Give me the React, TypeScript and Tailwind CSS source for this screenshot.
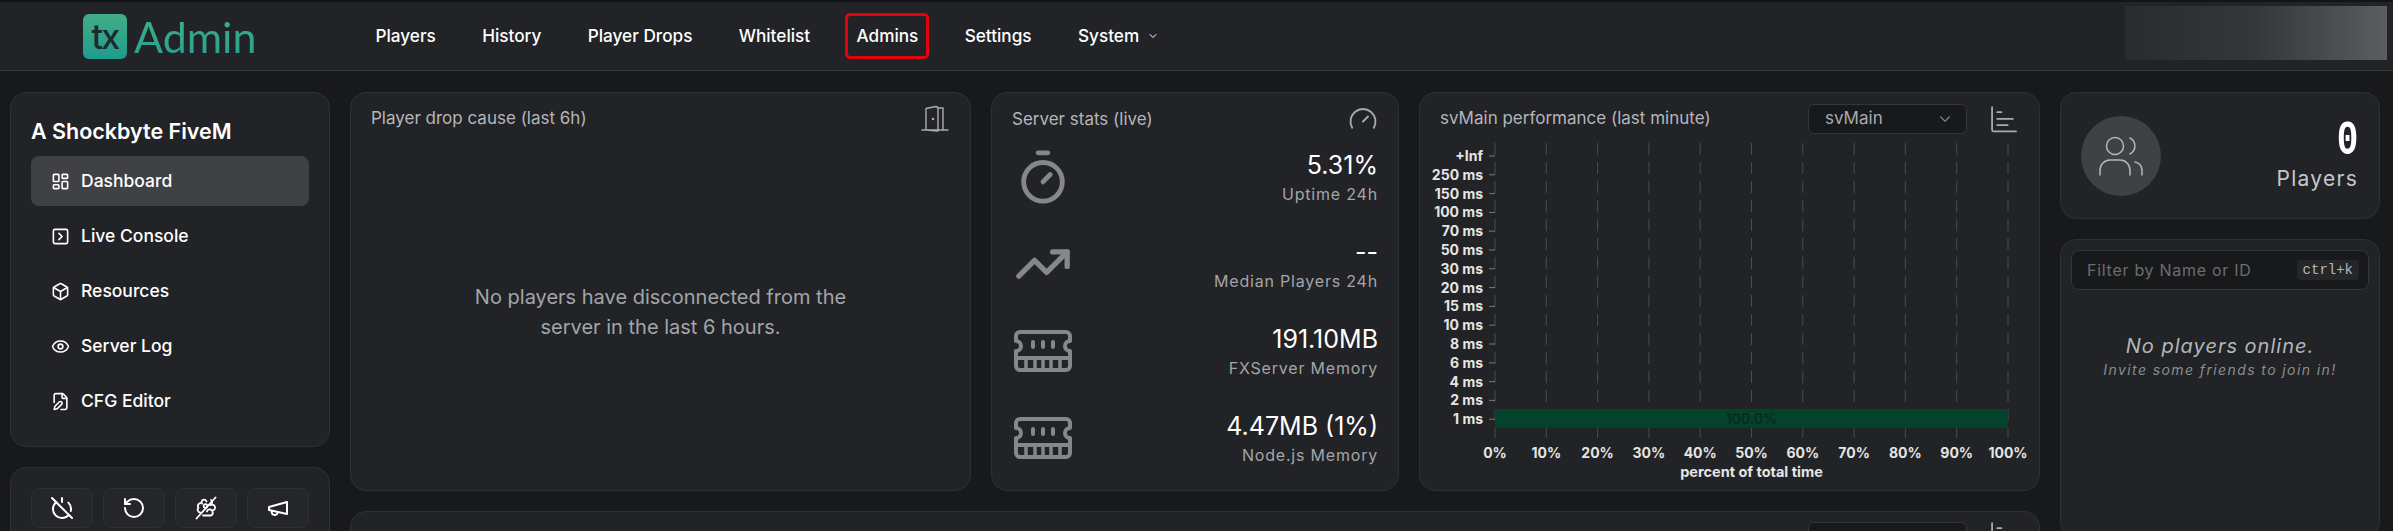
import {
  Box,
  ChevronDown,
  Eye,
  FilePen,
  Gauge,
  LayoutDashboard,
  PowerOff,
  RotateCcw,
  SquareChevronRight,
  Timer,
  TrendingUp,
} from "lucide-react";

const navLinks = ["Players", "History", "Player Drops", "Whitelist", "Admins", "Settings"];

const sideItems = [
  { label: "Dashboard", icon: LayoutDashboard, active: true },
  { label: "Live Console", icon: SquareChevronRight },
  { label: "Resources", icon: Box },
  { label: "Server Log", icon: Eye },
  { label: "CFG Editor", icon: FilePen },
];

function MemoryIcon() {
  return (
    <svg width="58" height="42" viewBox="0 0 58 42" fill="none" stroke="currentColor" strokeWidth="4" strokeLinecap="round" strokeLinejoin="round">
      <path d="M6 2H52A4 4 0 0 1 56 6V11A5 5 0 0 0 56 21V36A4 4 0 0 1 52 40H6A4 4 0 0 1 2 36V21A5 5 0 0 0 2 11V6A4 4 0 0 1 6 2Z" />
      <path d="M2 28H56M19 12v5M29 12v5M39 12v5" />
      <path strokeWidth="3.5" strokeLinecap="butt" d="M12 28v12M21 28v12M29 28v12M37 28v12M46 28v12" />
    </svg>
  );
}

const stats = [
  { value: "5.31%", label: "Uptime 24h", icon: <Timer size={58} strokeWidth={2} /> },
  { value: "--", label: "Median Players 24h", icon: <TrendingUp size={58} strokeWidth={2.2} /> },
  { value: "191.10MB", label: "FXServer Memory", icon: <MemoryIcon /> },
  { value: "4.47MB (1%)", label: "Node.js Memory", icon: <MemoryIcon /> },
];

const buckets = ["+Inf", "250 ms", "150 ms", "100 ms", "70 ms", "50 ms", "30 ms", "20 ms", "15 ms", "10 ms", "8 ms", "6 ms", "4 ms", "2 ms", "1 ms"];
const percents = ["0%", "10%", "20%", "30%", "40%", "50%", "60%", "70%", "80%", "90%", "100%"];

function DoorIcon() {
  return (
    <svg width="30" height="30" viewBox="0 0 30 30" fill="none" stroke="currentColor" strokeWidth="1.4" strokeLinecap="round" strokeLinejoin="round">
      <path d="M2 26h26M6 26V4.5L16 2.5l2 1v23.5l-12-1M18 4h5v22" />
      <circle cx="13" cy="15" r="0.6" fill="currentColor" />
    </svg>
  );
}

function BarsIcon() {
  return (
    <svg width="27" height="27" viewBox="0 0 26 26" fill="none" stroke="currentColor" strokeWidth="1.7" strokeLinecap="round" className="shrink-0">
      <path d="M2 1v22a1.5 1.5 0 0 0 1.5 1.5H25M7 6h4M7 12.5h15M7 18.5h10" />
    </svg>
  );
}

function FlowerOffIcon() {
  return (
    <svg width="24" height="24" viewBox="0 0 24 24" fill="none" stroke="currentColor" strokeWidth="1.8" strokeLinecap="round" strokeLinejoin="round">
      <path d="M8 7.5a2.5 2.5 0 1 1 4.5-2M8 7.5a2.8 2.8 0 0 0-3.5 4.200A2.8 2.8 0 0 0 6 16.5M16 9a2.8 2.8 0 0 0 1-5M17 9a2.8 2.8 0 0 1 4 3 2.8 2.8 0 0 1-3.5 2.5M13 15.5a2.8 2.8 0 0 1 5.5.5c.5 1.5 0 3-1.5 3.5H9" />
      <circle cx="11.5" cy="10" r="1.8" />
      <path d="M2.5 22.5 21.5 1.5" />
    </svg>
  );
}

function MegaphoneIcon() {
  return (
    <svg width="24" height="24" viewBox="0 0 24 24" fill="none" stroke="currentColor" strokeWidth="2" strokeLinecap="round" strokeLinejoin="round">
      <path d="m3 11 18-5v12L3 14v-3z" />
      <path d="M11.6 16.8a3 3 0 1 1-5.8-1.6" />
    </svg>
  );
}

function UsersIcon() {
  return (
    <svg width="48" height="48" viewBox="0 0 48 48" fill="none" stroke="currentColor" strokeWidth="1.5" strokeLinecap="round">
      <circle cx="18" cy="14" r="8.5" />
      <path d="M3 43v-5a10 10 0 0 1 10-10h10a10 10 0 0 1 10 10v5M33 6a9 9 0 0 1 0 16M38 30a8 8 0 0 1 7 8v5" />
    </svg>
  );
}

function PerfChart() {
  const left = 75;
  const right = 588;
  const rowY = (i: number) => 63 + i * 18.8;
  const colX = (i: number) => left + (i * (right - left)) / 10;
  return (
    <svg width="619" height="397" viewBox="0 0 619 397" className="block" fontFamily="Inter, sans-serif">
      {percents.map((p, i) => (
        <g key={p}>
          <line x1={colX(i)} x2={colX(i)} y1="50" y2="345" stroke="#4a4c50" strokeWidth="1" strokeDasharray="12 7" />
          <text x={colX(i)} y="365" textAnchor="middle" fontSize="14" fontWeight="700" fill="#e5e5e5">
            {p}
          </text>
        </g>
      ))}
      {buckets.map((b, i) => (
        <g key={b}>
          <line x1={left - 6} x2={left} y1={rowY(i)} y2={rowY(i)} stroke="#77797d" />
          <text x={left - 12} y={rowY(i) + 5} textAnchor="end" fontSize="14" fontWeight="700" fill="#e5e5e5">
            {b}
          </text>
        </g>
      ))}
      <rect x={left} y="316" width={right - left} height="19" fill="#03432b" />
      <text x={(left + right) / 2} y="331" textAnchor="middle" fontSize="14" fontWeight="600" fill="#0b2a1d">
        100.0%
      </text>
      <text x={(left + right) / 2} y="384" textAnchor="middle" fontSize="14.5" fontWeight="700" fill="#e5e5e5">
        percent of total time
      </text>
    </svg>
  );
}

function ThreadSelect({ label }: { label?: string }) {
  return (
    <div className="flex h-[30px] w-[159px] shrink-0 items-center justify-between rounded-md border border-[#35363a] bg-[#18191b] pl-4 pr-3 text-[17px] text-[#a9abaf]">
      <span>{label}</span>
      <ChevronDown size={18} strokeWidth={1.5} className="text-[#808286]" />
    </div>
  );
}

export default function App() {
  return (
    <div className="h-screen overflow-hidden bg-[#18191b] font-['Inter',sans-serif] text-white">
      <header className="relative flex h-[71px] items-center border-b border-[#38393c] border-t-2 border-t-[#131416] bg-[#222326]">
        <div className="ml-[83px] flex items-center">
          <div className="flex h-[45px] w-[44px] items-center justify-center rounded-md bg-gradient-to-b from-[#42ad85] to-[#1c9c8e] text-[34px] font-medium tracking-tighter text-[#1c2b2b]">
            tx
          </div>
          <span className="ml-[7px] bg-gradient-to-b from-[#3fae8e] to-[#27a08e] bg-clip-text font-['Lato',sans-serif] text-[43px] leading-none text-transparent">
            Admin
          </span>
        </div>
        <nav className="ml-[119px] flex items-center gap-[46.3px] text-[17.2px] font-medium">
          {navLinks.map((l) => (
            <a key={l} className="relative">
              {l}
              {l === "Admins" && (
                <span className="absolute -inset-x-[11px] -inset-y-[10px] rounded-[5px] border-[3px] border-[#e3000f]" />
              )}
            </a>
          ))}
          <a className="flex items-center gap-2">
            System
            <ChevronDown size={12} />
          </a>
        </nav>
        <div className="absolute right-[6px] top-[4px] h-[54px] w-[262px] bg-gradient-to-r from-[#2a2b2f] via-[#36373c] to-[#5c5d5e]" />
      </header>

      <main className="flex gap-5 pl-[10px] pt-[21px]">
        <aside className="flex w-[320px] shrink-0 flex-col gap-5">
          <section className="h-[355px] rounded-2xl border border-[#2f3033] bg-[#222326] px-5 pt-[26px]">
            <h2 className="text-[21.5px] font-semibold leading-6">A Shockbyte FiveM</h2>
            <ul className="mt-[13px] flex flex-col gap-[5px]">
              {sideItems.map((item) => (
                <li
                  key={item.label}
                  className={`flex h-[50px] items-center gap-[11px] rounded-lg pl-5 text-[17.5px] font-medium ${
                    item.active ? "bg-[#3f4145]" : ""
                  }`}
                >
                  <item.icon size={19} strokeWidth={2} />
                  {item.label}
                </li>
              ))}
            </ul>
          </section>
          <section className="h-[100px] rounded-2xl border border-[#2f3033] bg-[#222326] px-5 pt-5">
            <div className="grid grid-cols-4 gap-[10px]">
              {[
                <PowerOff key="stop" size={24} />,
                <RotateCcw key="restart" size={24} />,
                <FlowerOffIcon key="kick" />,
                <MegaphoneIcon key="announce" />,
              ].map((icon) => (
                <button key={icon.key} className="flex h-10 items-center justify-center rounded-lg border border-[#2f3033] bg-[#25262a]">
                  {icon}
                </button>
              ))}
            </div>
          </section>
        </aside>

        <div className="flex w-[1690px] shrink-0 flex-col gap-5">
          <div className="flex h-[399px] gap-5">
            <section className="flex w-[621px] flex-col rounded-2xl border border-[#2f3033] bg-[#222326] px-5 pt-[11px]">
              <div className="flex items-start justify-between">
                <h3 className="text-[17px] leading-7 text-[#b4b6ba]">Player drop cause (last 6h)</h3>
                <span className="text-[#a9abaf]">
                  <DoorIcon />
                </span>
              </div>
              <p className="mx-auto mt-[148px] w-[400px] text-center text-[20px] leading-[30px] text-[#a3a5a9]">
                No players have disconnected from the server in the last 6 hours.
              </p>
            </section>

            <section className="w-[408px] rounded-2xl border border-[#2f3033] bg-[#222326] px-5 pt-[11px]">
              <div className="flex items-center justify-between">
                <h3 className="text-[17px] leading-7 text-[#b4b6ba]">Server stats (live)</h3>
                <Gauge size={30} strokeWidth={1.5} className="text-[#a9abaf]" />
              </div>
              <div className="mt-[3px] flex flex-col gap-[7px]">
                {stats.map((s) => (
                  <div key={s.label} className="flex h-[80px] items-center justify-between">
                    <span className="pl-[2px] text-[#85878b]">{s.icon}</span>
                    <div className="text-right">
                      <div className="text-[25px] leading-8">{s.value}</div>
                      <div className="mt-[1px] text-[16px] leading-6 tracking-[0.05em] text-[#a3a5a9]">{s.label}</div>
                    </div>
                  </div>
                ))}
              </div>
            </section>

            <section className="w-[621px] rounded-2xl border border-[#2f3033] bg-[#222326]">
              <div className="flex h-[52px] items-center pl-5 pr-[22px]">
                <h3 className="flex-1 text-[17px] text-[#b4b6ba]">svMain performance (last minute)</h3>
                <ThreadSelect label="svMain" />
                <span className="ml-[23px] text-[#a9abaf]">
                  <BarsIcon />
                </span>
              </div>
              <div className="-mt-[52px]">
                <PerfChart />
              </div>
            </section>
          </div>

          <section className="flex h-[100px] justify-end rounded-2xl border border-[#2f3033] bg-[#222326] pr-[22px] pt-[10px]">
            <ThreadSelect />
            <span className="ml-[23px] text-[#a9abaf]">
              <BarsIcon />
            </span>
          </section>
        </div>

        <aside className="flex w-[320px] shrink-0 flex-col gap-5">
          <section className="flex h-[127px] items-center justify-between rounded-2xl border border-[#2f3033] bg-[#222326] pl-5 pr-[21px]">
            <div className="flex h-20 w-20 items-center justify-center rounded-full bg-[#3f4145] text-[#b4b6ba]">
              <UsersIcon />
            </div>
            <div className="text-right">
              <div className="origin-right scale-x-75 font-['Liberation_Mono',monospace] text-[48px] font-bold leading-[46px]">0</div>
              <div className="mt-[1px] text-[21px] leading-7 tracking-[0.06em] text-[#c5c7ca]">Players</div>
            </div>
          </section>
          <section className="h-[300px] rounded-2xl border border-[#2f3033] bg-[#222326] px-[10px] pt-[10px]">
            <div className="flex h-10 items-center justify-between rounded-lg border border-[#35363a] bg-[#18191b] pl-[15px] pr-[9px]">
              <span className="text-base tracking-[0.045em] text-[#6b6d72]">Filter by Name or ID</span>
              <kbd className="rounded bg-[#25262a] px-[6px] font-['Liberation_Mono',monospace] text-[14px] leading-5 text-[#b4b6ba]">ctrl+k</kbd>
            </div>
            <div className="mt-[42px] text-center italic">
              <p className="text-[20px] leading-7 tracking-[0.05em] text-[#b4b6ba]">No players online.</p>
              <p className="text-[14px] leading-5 tracking-[0.1em] text-[#8a8c90]">Invite some friends to join in!</p>
            </div>
          </section>
        </aside>
      </main>
    </div>
  );
}
